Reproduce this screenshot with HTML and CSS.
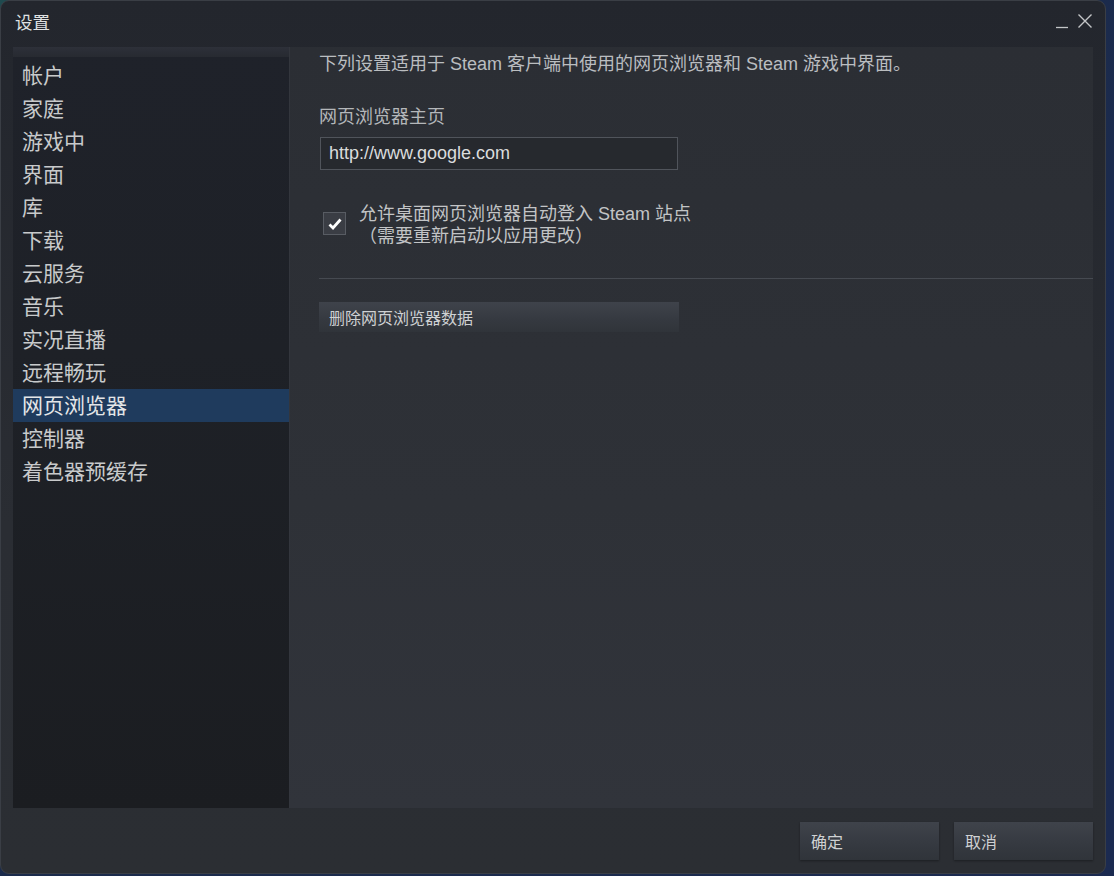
FILE: index.html
```html
<!DOCTYPE html>
<html lang="zh-CN">
<head>
<meta charset="utf-8">
<title>设置</title>
<link rel="stylesheet" href="styles.css">
</head>
<body>
<div class="window">
  <div class="titlebar">
    <span class="title">设置</span>
    <div class="controls">
      <svg class="ctl" width="14" height="16" viewBox="0 0 14 16"><line x1="1" y1="14.5" x2="13" y2="14.5" stroke="#c4c6c8" stroke-width="1.3"/></svg>
      <svg class="ctl" width="16" height="16" viewBox="0 0 16 16"><path d="M1.5 1.5 L14.5 14.5 M14.5 1.5 L1.5 14.5" stroke="#c4c6c8" stroke-width="1.4" fill="none"/></svg>
    </div>
  </div>
  <div class="main">
    <nav class="sidebar">
      <div class="side-top"></div>
      <ul class="menu">
        <li>帐户</li>
        <li>家庭</li>
        <li>游戏中</li>
        <li>界面</li>
        <li>库</li>
        <li>下载</li>
        <li>云服务</li>
        <li>音乐</li>
        <li>实况直播</li>
        <li>远程畅玩</li>
        <li class="active">网页浏览器</li>
        <li>控制器</li>
        <li>着色器预缓存</li>
      </ul>
    </nav>
    <section class="content">
      <p class="desc">下列设置适用于 Steam 客户端中使用的网页浏览器和 Steam 游戏中界面。</p>
      <div class="label">网页浏览器主页</div>
      <div class="input">http://www.google.com</div>
      <div class="check-row">
        <span class="checkbox">
          <svg width="14" height="12" viewBox="0 0 14 12"><path d="M1.5 6.5 L5 10 L12.5 1.5" stroke="#ffffff" stroke-width="2.8" fill="none"/></svg>
        </span>
        <div class="check-text">允许桌面网页浏览器自动登入 Steam 站点<br><span class="sub">（需要重新启动以应用更改）</span></div>
      </div>
      <div class="sep"></div>
      <div class="btn wide">删除网页浏览器数据</div>
    </section>
  </div>
  <div class="footer">
    <div class="btn foot">确定</div>
    <div class="btn foot">取消</div>
  </div>
</div>
</body>
</html>
```

FILE: styles.css
```css
* { box-sizing: border-box; }
html, body { margin: 0; padding: 0; }
body {
  width: 1114px;
  height: 876px;
  background: linear-gradient(135deg, #1f4a4f 0%, #1b2b4a 30%, #1b2a50 100%);
  font-family: "Liberation Sans", "Noto Sans CJK SC", sans-serif;
  color: #c6c8ca;
  overflow: hidden;
}
.window {
  width: 1106px;
  height: 874px;
  background: linear-gradient(180deg, #23262d 0%, #2a2d33 60%, #2b2e33 100%);
  border-radius: 9px;
  border: 1px solid #3a3e45;
  display: flex;
  flex-direction: column;
  padding: 0 12px 0 12px;
}
.titlebar {
  height: 46px;
  display: flex;
  align-items: flex-start;
  justify-content: space-between;
}
.title {
  font-size: 17.5px;
  color: #dfe0e1;
  margin-top: 11px;
  margin-left: 2px;
  line-height: 22px;
}
.controls {
  display: flex;
  gap: 8px;
  margin-top: 12px;
  margin-right: 0;
}
.main {
  display: flex;
  height: 761px;
}
.sidebar {
  width: 276px;
  background: linear-gradient(180deg, #1f222a 0%, #1e2127 40%, #1b1d21 100%);
  display: flex;
  flex-direction: column;
}
.side-top {
  height: 10px;
  background: linear-gradient(180deg, #2d3039 0%, #272a31 100%);
}
.menu {
  list-style: none;
  margin: 0;
  padding: 2px 0 0 0;
}
.menu li {
  height: 33px;
  line-height: 33px;
  font-size: 21px;
  padding-left: 9px;
  color: #c8cacb;
}
.menu li.active {
  background: #1f3b5d;
  color: #e4e6e8;
}
.content {
  flex: 1;
  background: linear-gradient(180deg, #2b2e34 0%, #2e3137 60%, #31343b 100%);
  border-left: 1px solid #33363d;
  padding: 0 0 0 29px;
  display: flex;
  flex-direction: column;
}
.desc {
  margin: 5px 0 0 0;
  font-size: 18px;
  line-height: 24px;
  color: #babdc0;
}
.label {
  margin-top: 30px;
  font-size: 18px;
  line-height: 22px;
  color: #b4b7ba;
}
.input {
  margin-top: 9px;
  margin-left: 1px;
  width: 358px;
  height: 33px;
  border: 1px solid #50545b;
  background: #26292e;
  font-size: 18px;
  line-height: 31px;
  padding-left: 8px;
  color: #dadcdd;
}
.check-row {
  display: flex;
  align-items: flex-start;
  margin-top: 32px;
  margin-left: 4px;
}
.checkbox {
  width: 23px;
  height: 23px;
  margin-top: 10px;
  border: 1px solid #585c63;
  background: #3a3d44;
  display: flex;
  align-items: center;
  justify-content: center;
}
.check-text {
  margin-left: 13px;
  margin-top: 1px;
  font-size: 18px;
  line-height: 22px;
  color: #c2c4c6;
}
.sep {
  margin-top: 31px;
  height: 1px;
  background: #464a51;
}
.btn {
  background: linear-gradient(180deg, #3f434b 0%, #353940 60%, #30343a 100%);
  color: #cfd1d3;
  display: flex;
  align-items: center;
}
.wide {
  margin-top: 23px;
  width: 360px;
  height: 30px;
  font-size: 16px;
  padding-left: 10px;
}
.footer {
  flex: 1;
  display: flex;
  justify-content: flex-end;
  align-items: flex-start;
  gap: 15px;
  padding-top: 14px;
}
.foot {
  width: 139px;
  height: 38px;
  font-size: 16px;
  padding-left: 11px;
  box-shadow: 0 1px 2px rgba(0,0,0,0.35);
}
```
